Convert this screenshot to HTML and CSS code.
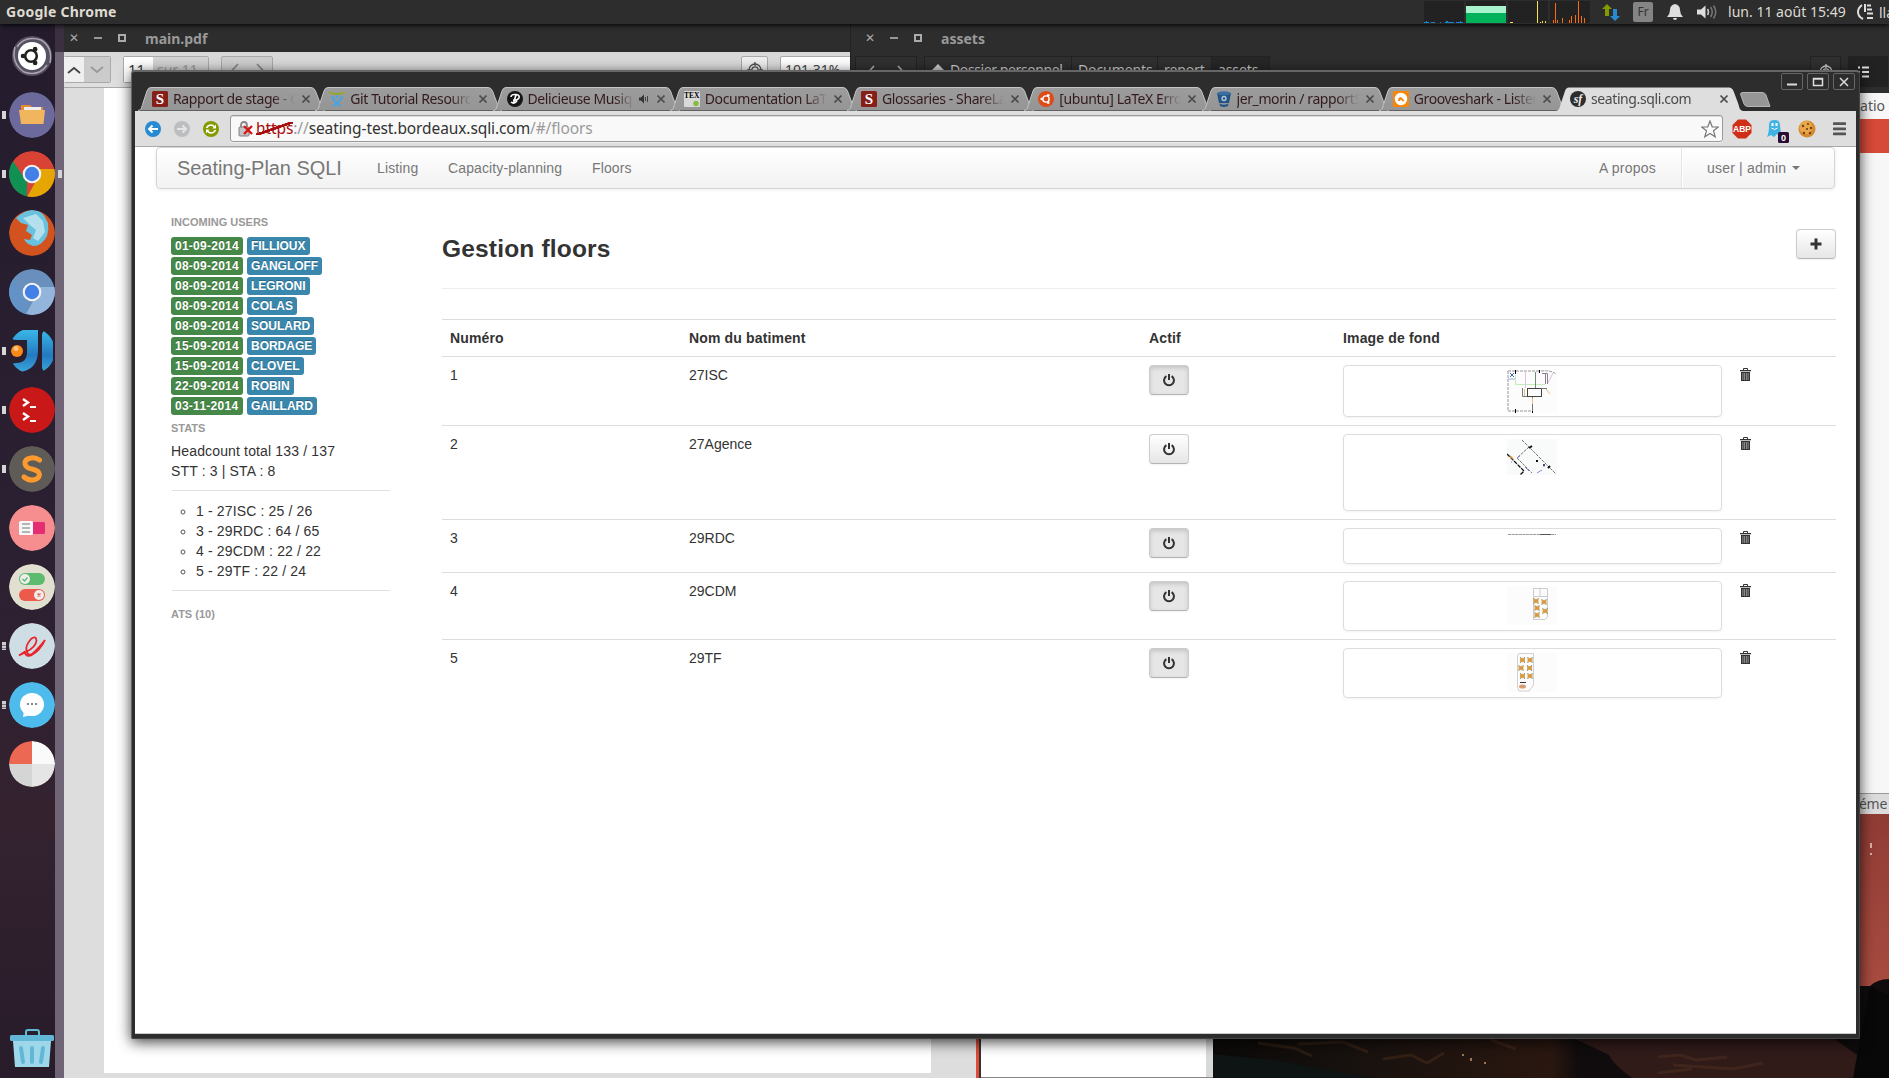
FILE: index.html
```html
<!DOCTYPE html>
<html lang="fr">
<head>
<meta charset="utf-8">
<title>Seating-Plan SQLI</title>
<link rel="stylesheet" href="styles.css">
</head>
<body>
<svg class="defs" width="0" height="0">
  <defs>
    <linearGradient id="tabfill" x1="0" y1="0" x2="0" y2="1"><stop offset="0" stop-color="#9c9c9c"/><stop offset="1" stop-color="#959595"/></linearGradient>
    <symbol id="tab" viewBox="0 0 187 24"><path d="M0 23.500C4 23 3.500 20 5 16L9 4Q10 .5 13 .5H173Q176 .5 177.500 4L182 16C183.500 20 183 23 187 23.500" fill="url(#tabfill)" stroke="#c4c4c4"/></symbol>
    <symbol id="tabon" viewBox="0 0 187 24"><path d="M0 24C4 23 3.500 20 5 16L9 4Q10 .5 13 .5H173Q176 .5 177.500 4L182 16C183.500 20 183 23 187 24Z" fill="#dedede"/></symbol>
    <symbol id="x" viewBox="0 0 10 10"><path d="M1.500 1.500L8.500 8.500M8.500 1.500L1.500 8.500" stroke="#4a4a4a" stroke-width="1.700"/></symbol>
    <symbol id="s" viewBox="0 0 16 16"><rect width="16" height="16" rx="1.500" fill="#852019"/><text x="8" y="13.300" text-anchor="middle" font-family="Liberation Serif" font-weight="bold" font-size="15" fill="#fff">S</text></symbol>
    <symbol id="power" viewBox="0 0 12 14"><path d="M3.400 3.200A4.900 4.900 0 1 0 8.600 3.200M6 1V7" fill="none" stroke="#333" stroke-width="2"/></symbol>
    <symbol id="trash" viewBox="0 0 11 13"><path d="M3.500 2V.5H7.500V2" fill="none" stroke="#333"/><rect y="2" width="11" height="1.300" fill="#333"/><path d="M1 4H10V13H1Z" fill="#333"/><path d="M2.900 5V12M4.600 5V12M6.400 5V12M8.100 5V12" stroke="#aaa" stroke-width=".8"/></symbol>
    <symbol id="desk" viewBox="0 0 7 7"><rect x=".6" y="1" width="5.800" height="5" fill="#e0a650"/><path d="M.5 .8H1.500M5.500 .8H6.500M.5 6.200H1.500M5.500 6.200H6.500" stroke="#46664b"/><path d="M1.500 3.500H5.500" stroke="#b58150" stroke-width=".8"/></symbol>
    <symbol id="target" viewBox="0 0 16 16"><g fill="none" stroke="currentColor" stroke-width="1.300"><circle cx="8" cy="8" r="6"/><circle cx="8" cy="8" r="3.200"/><path d="M8 0V4M0 8H4M12 8H16"/></g></symbol>
    <symbol id="prev" viewBox="0 0 8 14"><path d="M7 1L1.500 7L7 13" fill="none" stroke="currentColor" stroke-width="1.800"/></symbol>
    <symbol id="next" viewBox="0 0 8 14"><path d="M1 1L6.500 7L1 13" fill="none" stroke="currentColor" stroke-width="1.800"/></symbol>
    <symbol id="ubuntu" viewBox="0 0 16 16"><circle cx="8" cy="8" r="4.200" fill="none" stroke="currentColor" stroke-width="1.900"/><g fill="currentColor"><circle cx="2.200" cy="8" r="1.700"/><circle cx="11" cy="3" r="1.700"/><circle cx="11" cy="13" r="1.700"/></g></symbol>
  </defs>
</svg>
<div class="desktop">
  <svg class="wallpaper" width="677" height="264" viewBox="0 0 677 264">
    <defs><linearGradient id="sky" x1="0" y1="0" x2="0" y2="1"><stop offset="0" stop-color="#8f3c35"/><stop offset=".65" stop-color="#a84b40"/></linearGradient>
    <linearGradient id="ground" x1="0" y1="0" x2="1" y2="0"><stop offset="0" stop-color="#0b0a09"/><stop offset=".2" stop-color="#17110e"/><stop offset=".5" stop-color="#2a1710"/><stop offset=".54" stop-color="#100c0d"/></linearGradient></defs>
    <rect width="677" height="264" fill="url(#sky)"/>
    <path d="M0 172H657Q664 165 677 165V264H0Z" fill="url(#ground)"/>
    <path d="M360 224H620L677 264H419Q400 250 396 241Z" fill="#301b19"/>
    <path d="M657 172L677 182V264H640Z" fill="#090809"/>
    <g fill="none" stroke="#674023" stroke-width="3" opacity=".3"><path d="M45 229l36 5 18 8M85 230l45-2 25 10M170 245l28-4 16 8 17-10M278 226l25 9M445 243l22-2 16 5 31-3M460 251l60 4 30-6M445 259l34-4"/></g>
    <path d="M0 240L60 246L160 264H0Z" fill="#0e1414"/>
    <path d="M249 240h2v2h-2zM257 244h2v3h-2zM271 248h2v2h-2z" fill="#9a7654"/>
    <path d="M657 29h2v5h-2zM657 39h2v2h-2z" fill="#dfb0a5"/>
  </svg>

  <section class="win pdf">
    <header class="titlebar"><i class="wc-x">✕</i><i class="wc-min"></i><i class="wc-max"></i><b>main.pdf</b></header>
    <div class="pdfbar">
      <div class="updown"><span><svg width="14" height="8"><path d="M1 7L7 2L13 7" fill="none" stroke="#444" stroke-width="1.800"/></svg></span><span class="off"><svg width="14" height="8"><path d="M1 1L7 6L13 1" fill="none" stroke="#999" stroke-width="1.800"/></svg></span></div>
      <div class="pages"><span>11</span><em>sur 11</em></div>
      <div class="hist"><svg width="8" height="14"><use href="#prev"/></svg><svg width="8" height="14"><use href="#next"/></svg></div>
      <div class="fit"><svg width="16" height="16"><use href="#target"/></svg></div>
      <div class="zoomval">101,31%</div>
    </div>
    <div class="pdfbody"><div class="sheet"></div></div>
  </section>
  <div class="edge"><div class="e1"></div><div class="e2"></div><div class="e3"></div></div>

  <section class="win assets">
    <header class="titlebar"><i class="wc-x">✕</i><i class="wc-min"></i><i class="wc-max"></i><b>assets</b></header>
    <div class="crumbs">
      <div class="nav2"><svg width="8" height="14"><use href="#prev"/></svg><svg width="8" height="14"><use href="#next"/></svg></div>
      <div class="path"><span class="home"><svg width="14" height="12"><path d="M0 7L7 0L14 7H12V12H2V7Z" fill="#ccc"/></svg>Dossier personnel</span><span class="docs">Documents</span><span class="rep">report</span><span class="cur">assets</span></div>
      <div class="tgt"><svg width="16" height="16"><use href="#target"/></svg></div>
      <div class="views"><svg width="12" height="12"><path d="M0 1.500H2M4 1.500H11M0 6H2M4 6H11M0 10.500H2M4 10.500H11" stroke="#ddd" stroke-width="2"/></svg></div>
    </div>
    <div class="colhead">tatio</div>
    <div class="redband"></div>
    <div class="listing"></div>
    <footer>éme</footer>
  </section>

  <section class="win chrome">
    <div class="wbtns"><span><svg width="12" height="10"><path d="M1 7.500H11" stroke="#ddd" stroke-width="2"/></svg></span><span><svg width="12" height="10"><path d="M1.500 1.500H10.500V8.500H1.500ZM1 2H11" fill="none" stroke="#ddd" stroke-width="1.500"/></svg></span><span><svg width="12" height="10"><path d="M2 1L10 9M10 1L2 9" stroke="#ddd" stroke-width="1.500"/></svg></span></div>
    <div class="tabs">
      <div class="tab"><svg class="shape"><use href="#tab"/></svg><svg class="fav"><use href="#s"/></svg><span>Rapport de stage - G</span><svg class="cl"><use href="#x"/></svg></div>
      <div class="tab"><svg class="shape"><use href="#tab"/></svg><svg class="fav"><path d="M0 1Q8 5 16 1" fill="none" stroke="#91aa24" stroke-width="1.800"/><path d="M3 5Q4 10 12 15M13 5Q12 10 4 15" fill="none" stroke="#4fa3dd" stroke-width="2.400"/><circle cx="8" cy="5.500" r="1.700" fill="#4fa3dd"/></svg><span>Git Tutorial Resourc</span><svg class="cl"><use href="#x"/></svg></div>
      <div class="tab"><svg class="shape"><use href="#tab"/></svg><svg class="fav"><circle cx="8" cy="8" r="8" fill="#161616"/><path d="M4 6Q4 3 9 3.500Q13 4 12 7Q10 10 6 9M9 4L6.500 12M4 11Q7 13.500 10 10" fill="none" stroke="#fff" stroke-width="1.600"/></svg><span class="short">Delicieuse Musiq</span><svg class="snd" width="11" height="10"><path d="M0 3.500H2L5 .5V9.500L2 6.500H0Z" fill="#333"/><path d="M6.500 3V7M8.500 2V8" stroke="#444"/></svg><svg class="cl"><use href="#x"/></svg></div>
      <div class="tab"><svg class="shape"><use href="#tab"/></svg><svg class="fav"><rect width="16" height="16" rx="1" fill="#d9d9d9"/><text x="0" y="7" font-family="Liberation Serif" font-size="7.500" font-weight="bold">TEX</text><circle cx="12" cy="12.500" r="2.800" fill="#85bd40"/></svg><span>Documentation LaT</span><svg class="cl"><use href="#x"/></svg></div>
      <div class="tab"><svg class="shape"><use href="#tab"/></svg><svg class="fav"><use href="#s"/></svg><span>Glossaries - ShareLaT</span><svg class="cl"><use href="#x"/></svg></div>
      <div class="tab"><svg class="shape"><use href="#tab"/></svg><svg class="fav" color="#fff"><circle cx="8" cy="8" r="8" fill="#dd4b18"/><use href="#ubuntu" x="2" y="2" width="12" height="12"/></svg><span>[ubuntu] LaTeX Erro</span><svg class="cl"><use href="#x"/></svg></div>
      <div class="tab"><svg class="shape"><use href="#tab"/></svg><svg class="fav"><path d="M1 2L3 12H13L15 2Z" fill="#225487"/><ellipse cx="8" cy="2.300" rx="7" ry="2" fill="#3c6f9f"/><circle cx="8" cy="7.500" r="2" fill="#225487" stroke="#b9c9d8" stroke-width="1.300"/><path d="M3.500 12.500Q8 15 12.500 12.500L12 15Q8 17 4 15Z" fill="#225487"/></svg><span>jer_morin / rapportS</span><svg class="cl"><use href="#x"/></svg></div>
      <div class="tab"><svg class="shape"><use href="#tab"/></svg><svg class="fav"><rect width="16" height="16" fill="#f7860b"/><circle cx="8" cy="8" r="6.200" fill="#fff"/><path d="M5 10Q5 6 8 6L11.500 9.500L9.500 10.500L8 8.500Q7 8.500 7 10Z" fill="#f7860b"/></svg><span>Grooveshark - Listen</span><svg class="cl"><use href="#x"/></svg></div>
      <div class="tab on"><svg class="shape"><use href="#tabon"/></svg><svg class="fav"><circle cx="8" cy="8" r="8" fill="#2d2d2d"/><text x="8" y="11.500" text-anchor="middle" font-family="Liberation Serif" font-style="italic" font-weight="bold" font-size="12" fill="#eee">sf</text></svg><span>seating.sqli.com</span><svg class="cl"><use href="#x"/></svg></div>
      <svg class="newtab" width="31" height="15"><path d="M3 .5H22Q25 .5 26 3L30 14.500H8Q5 14.500 4 12L.5 2Q.5 .5 3 .5Z" fill="#969696" stroke="#b5b5b5"/></svg>
    </div>
    <div class="toolbar">
      <svg width="16" height="16"><circle cx="8" cy="8" r="8" fill="#268bd2"/><path d="M13 8H4M7.500 4.500L4 8L7.500 11.500" fill="none" stroke="#fff" stroke-width="1.900"/></svg>
      <svg width="16" height="16"><circle cx="8" cy="8" r="8" fill="#bbbfc1"/><path d="M3 8H12M8.500 4.500L12 8L8.500 11.500" fill="none" stroke="#e5e5e5" stroke-width="1.900"/></svg>
      <svg width="16" height="16"><circle cx="8" cy="8" r="8" fill="#859900"/><path d="M3.500 7Q5 4 8 4Q10 4 11.500 6M12.500 9Q11 12 8 12Q6 12 4.500 10" fill="none" stroke="#fff" stroke-width="1.600"/><path d="M13 3.500V7.500H9.500ZM3 12.500V8.500H6.500Z" fill="#fff"/></svg>
      <div class="omni">
        <svg width="15" height="16"><path d="M3 7V4.500Q3 1 6 1Q9 1 9 4.500V7" fill="none" stroke="#888" stroke-width="1.800"/><rect x="1" y="6" width="10" height="9" rx="1" fill="#c4c4c4" stroke="#808080"/><path d="M6 5L14 13M14 5L6 13" stroke="#d71414" stroke-width="2.300"/></svg>
        <span class="url"><s>https</s><i>://</i>seating-test.bordeaux.sqli.com<i>/#/floors</i></span>
        <svg class="star" width="18" height="18"><path d="M9 1L11.200 6.800L17.300 7L12.500 10.800L14.200 16.800L9 13.400L3.800 16.800L5.500 10.800L.7 7L6.800 6.800Z" fill="#fcfcfc" stroke="#777" stroke-width="1.200"/></svg>
      </div>
      <svg class="abp" width="20" height="20"><path d="M6 .5H14L19.500 6V14L14 19.500H6L.5 14V6Z" fill="#cf2f16"/><text x="10" y="13.200" text-anchor="middle" font-family="Liberation Sans" font-size="8.500" font-weight="bold" fill="#fff">ABP</text></svg>
      <svg class="ghost" width="22" height="24"><path d="M2 6Q2 1 7.500 1Q13 1 13 6L14 17L10 15L7 18L4 16L0 18Q2 14 2 6Z" fill="#3fb4e4"/><path d="M5.500 4V7M9.500 4V7" stroke="#fff" stroke-width="2"/><path d="M4.500 9Q7.500 12 10.500 9" fill="none" stroke="#fff"/><rect x="11" y="13" width="11" height="11" rx="1.500" fill="#2a0d35"/><text x="16.500" y="21.800" text-anchor="middle" font-family="Liberation Sans" font-size="9" font-weight="bold" fill="#fff">0</text></svg>
      <svg class="cookie" width="18" height="18"><circle cx="9" cy="9" r="8.500" fill="#d58b2b"/><circle cx="8" cy="7.500" r="6.500" fill="#eaa74a"/><g fill="#70401a"><circle cx="5" cy="6" r="1.200"/><circle cx="10" cy="4" r="1.100"/><circle cx="9" cy="9" r="1.100"/><circle cx="13" cy="8" r="1.200"/><circle cx="6" cy="13" r="1.200"/><circle cx="12" cy="13" r="1.200"/></g></svg>
      <svg class="burger" width="13" height="14"><path d="M1 1.700H12M1 6.800H12M1 11.900H12" stroke="#555" stroke-width="2.800" stroke-linecap="round"/></svg>
    </div>

    <div class="page">
      <nav class="navbar">
        <span class="brand">Seating-Plan SQLI</span><span class="l1">Listing</span><span class="l2">Capacity-planning</span><span class="l3">Floors</span>
        <span class="about">A propos</span><span class="user">user | admin <i class="caret"></i></span>
      </nav>
      <div class="cols">
        <aside>
          <h6>INCOMING USERS</h6>
          <div class="inc"><b>01-09-2014</b><b class="n">FILLIOUX</b></div>
          <div class="inc"><b>08-09-2014</b><b class="n">GANGLOFF</b></div>
          <div class="inc"><b>08-09-2014</b><b class="n">LEGRONI</b></div>
          <div class="inc"><b>08-09-2014</b><b class="n">COLAS</b></div>
          <div class="inc"><b>08-09-2014</b><b class="n">SOULARD</b></div>
          <div class="inc"><b>15-09-2014</b><b class="n">BORDAGE</b></div>
          <div class="inc"><b>15-09-2014</b><b class="n">CLOVEL</b></div>
          <div class="inc"><b>22-09-2014</b><b class="n">ROBIN</b></div>
          <div class="inc"><b>03-11-2014</b><b class="n">GAILLARD</b></div>
          <h6 class="stats">STATS</h6>
          <p>Headcount total 133 / 137</p>
          <p>STT : 3 | STA : 8</p>
          <ul><li>1 - 27ISC : 25 / 26</li><li>3 - 29RDC : 64 / 65</li><li>4 - 29CDM : 22 / 22</li><li>5 - 29TF : 22 / 24</li></ul>
          <h6 class="ats">ATS (10)</h6>
        </aside>
        <main>
          <div class="head"><h1>Gestion floors</h1><button class="btn"><svg width="12" height="12"><path d="M6 .5V11.500M.5 6H11.500" stroke="#333" stroke-width="3"/></svg></button></div>
          <div class="table">
            <div class="row th"><span>Numéro</span><span>Nom du batiment</span><span>Actif</span><span>Image de fond</span><span></span></div>
            <div class="row r1"><span>1</span><span>27ISC</span><span><button class="btn act"><svg width="12" height="14"><use href="#power"/></svg></button></span>
              <span class="thumb"><svg width="50" height="43"><rect width="50" height="43" fill="#fcfcfc"/><path d="M1 1V41H25M1 1H32M34 1Q44 0 49 4" fill="none" stroke="#999" stroke-dasharray="3 1"/><path d="M8.500 0V4M32.500 0V3M8.500 39V43M25.500 39V43" stroke="#000"/><path d="M1 9H8" stroke="#9aaee8"/><path d="M3 3L7 7M7 3L3 7" stroke="#3d6aa2"/><path d="M8.500 5V14.500H38" fill="none" stroke="#c3ecbb"/><path d="M18.500 2V18M41 13L46 3" fill="none" stroke="#e3bfe4"/><path d="M28.500 2V18" stroke="#6d8d73"/><path d="M35 3.500H40.500V14M38.500 3V14" fill="none" stroke="#8e8090"/><rect x="20.500" y="18.500" width="14" height="8" fill="none" stroke="#444"/><path d="M15.500 18V26.500H20M34 18.500H40M25.500 27V41" fill="none" stroke="#777"/><path d="M17.500 19V26M39 19L43 24M25.500 28V34" stroke="#ebbb89" fill="none"/></svg></span>
              <span class="del"><svg width="11" height="13"><use href="#trash"/></svg></span></div>
            <div class="row r2"><span>2</span><span>27Agence</span><span><button class="btn"><svg width="12" height="14"><use href="#power"/></svg></button></span>
              <span class="thumb"><svg width="50" height="36"><rect width="50" height="36" fill="#f9fbfa"/><path d="M15 1L49 35M22 8L10 19L25 34" fill="none" stroke="#777" stroke-dasharray="3 1"/><path d="M0 15L17 32L13 36" fill="none" stroke="#111" stroke-width="1.300" stroke-dasharray="4 1"/><path d="M3 17L6 20" stroke="#e28a25" stroke-width="1.600"/><path d="M22 9L25 7M41 29L43 27M29 22H31M36 26H38" stroke="#111" stroke-width="2"/><path d="M18 28L22 32M30 34L35 31M37 25v3M4 23h1M10 19l3-2" stroke="#8a88d8"/></svg></span>
              <span class="del"><svg width="11" height="13"><use href="#trash"/></svg></span></div>
            <div class="row r3"><span>3</span><span>29RDC</span><span><button class="btn act"><svg width="12" height="14"><use href="#power"/></svg></button></span>
              <span class="thumb"><svg width="50" height="3"><path d="M1 1.500H49" stroke="#999" stroke-dasharray="3 .6"/><path d="M33 1.500H44" stroke="#555"/></svg></span>
              <span class="del"><svg width="11" height="13"><use href="#trash"/></svg></span></div>
            <div class="row r4"><span>4</span><span>29CDM</span><span><button class="btn act"><svg width="12" height="14"><use href="#power"/></svg></button></span>
              <span class="thumb"><svg width="50" height="39"><rect width="50" height="39" fill="#fcfcfc"/><path d="M26.500 2V33.500H38L40.500 31V2.500H26.500M33 2V10M26 10.500H40" fill="none" stroke="#ccc"/><use href="#desk" x="26" y="12" width="6" height="6"/><use href="#desk" x="34" y="13" width="6" height="6"/><use href="#desk" x="27" y="19" width="6" height="6"/><use href="#desk" x="35" y="22" width="6" height="6"/><use href="#desk" x="27" y="26" width="6" height="6"/></svg></span>
              <span class="del"><svg width="11" height="13"><use href="#trash"/></svg></span></div>
            <div class="row r5"><span>5</span><span>29TF</span><span><button class="btn act"><svg width="12" height="14"><use href="#power"/></svg></button></span>
              <span class="thumb"><svg width="50" height="39"><rect width="50" height="39" fill="#fcfcfc"/><path d="M12 .5H26.500V32L22 38H12L10.500 34V3Z" fill="none" stroke="#d0d0d0"/><use href="#desk" x="12" y="4" width="7" height="6"/><use href="#desk" x="20" y="4" width="6" height="6"/><use href="#desk" x="11" y="12" width="6" height="6"/><use href="#desk" x="19" y="12" width="7" height="6"/><use href="#desk" x="12" y="20" width="7" height="6"/><use href="#desk" x="20" y="20" width="6" height="6"/><path d="M13 29.500H19" stroke="#333"/><ellipse cx="15.500" cy="33.500" rx="3.500" ry="2" fill="#d69d72"/></svg></span>
              <span class="del"><svg width="11" height="13"><use href="#trash"/></svg></span></div>
          </div>
        </main>
      </div>
    </div>
  </section>

  <div class="launcher">
    <div class="ic"><svg viewBox="0 0 46 46" color="#222"><circle cx="23" cy="23" r="20" fill="#676171" opacity=".75"/><path d="M8 14Q16 2 32 7Q44 14 41 30M38 32Q30 44 15 39Q2 30 6 14" fill="none" stroke="#aaa6af" stroke-width="1.500"/><circle cx="23" cy="23" r="14" fill="#fff"/><use href="#ubuntu" x="11" y="12" width="22" height="22"/></svg></div>
    <div class="ic run"><svg viewBox="0 0 46 46"><circle cx="23" cy="23" r="23" fill="#6c6a9c"/><path d="M12 20V13H21L23 15H34V22" fill="#e88a2e"/><path d="M15 19V15H32V19" fill="#eee"/><path d="M10 18H36L34.500 32H12Z" fill="#f1b55e"/></svg></div>
    <div class="ic run focus"><svg viewBox="0 0 46 46"><circle cx="23" cy="23" r="23" fill="#d94336"/><path d="M4 10L18 31L18 46A23 23 0 0 1 4 10" fill="#109153"/><path d="M46 18A23 23 0 0 1 18 46L31 23L25 18Z" fill="#e5a503"/><circle cx="23" cy="23" r="9.300" fill="#f3f3f3"/><circle cx="23" cy="23" r="7.200" fill="#427fe6"/></svg></div>
    <div class="ic"><svg viewBox="0 0 46 46"><circle cx="23" cy="23" r="23" fill="#d2531f"/><path d="M7 8Q16 0 23 0Q32 0 36 7L39 13Q40 20 38 26Q33 36 24 36Q17 34 15 29L21 30L23 25L17 21L19 15L12 13Z" fill="#68c2df"/><path d="M14 8L27 4L34 11L36 22L29 31L24 28L27 20L21 15Z" fill="#b4e0ed"/></svg></div>
    <div class="ic"><svg viewBox="0 0 46 46"><circle cx="23" cy="23" r="23" fill="#698fbd"/><path d="M4 10L18 31L18 46A23 23 0 0 1 4 10" fill="#6393c6"/><path d="M46 18A23 23 0 0 1 17 45L29 23L25 18Z" fill="#93b5dc"/><circle cx="23" cy="23" r="9.300" fill="#f3f3f3"/><circle cx="23" cy="23" r="7.200" fill="#427fe6"/></svg></div>
    <div class="ic run"><svg viewBox="0 0 46 46"><defs><linearGradient id="ji" x1="0" y1="0" x2="0" y2="1"><stop offset="0" stop-color="#39b7e8"/><stop offset=".6" stop-color="#2479c0"/><stop offset="1" stop-color="#3aa6da"/></linearGradient></defs><path d="M2 5Q2 2 6 2H29V22Q29 43 9 44Q2 44 2 39Q2 35 7 35Q18 35 18 24V12H7Q2 12 2 7Z" fill="url(#ji)"/><rect x="33" y="2" width="11" height="42" rx="5" fill="url(#ji)"/><circle cx="8" cy="23" r="6" fill="#f98918"/><circle cx="7" cy="20.500" r="2.500" fill="#ffc37d"/></svg></div>
    <div class="ic run"><svg viewBox="0 0 46 46"><circle cx="23" cy="23" r="23" fill="#c91818"/><path d="M14 12L19 15.500L14 19M14 26L19 29.500L14 33" fill="none" stroke="#fff" stroke-width="2.400"/><path d="M21 20H27M21 34H27" stroke="#fff" stroke-width="2"/></svg></div>
    <div class="ic run"><svg viewBox="0 0 46 46"><circle cx="23" cy="23" r="23" fill="#5f5c57"/><path d="M30.500 14Q26 11 22 12Q15.500 13 16 18Q17 22 23 23Q30 24.500 30.500 28.500Q30 33 24 34Q19 34.500 15 31" fill="none" stroke="#fd9a2f" stroke-width="5" stroke-linecap="round"/></svg></div>
    <div class="ic"><svg viewBox="0 0 46 46"><circle cx="23" cy="23" r="23" fill="#f68d8f"/><rect x="23" y="17" width="13" height="12" rx="1.500" fill="#e42d72"/><rect x="10" y="16" width="14" height="14" rx="1.500" fill="#f7f7f7"/><path d="M13 19H21M13 23H21M13 27H21" stroke="#b5b5b5" stroke-width="2"/></svg></div>
    <div class="ic"><svg viewBox="0 0 46 46"><circle cx="23" cy="23" r="23" fill="#e0dfd0"/><rect x="10" y="9" width="26" height="12" rx="6" fill="#5dbb70"/><rect x="10" y="25" width="26" height="12" rx="6" fill="#ed5a4c"/><circle cx="16" cy="15" r="5" fill="#eee"/><circle cx="30" cy="31" r="5" fill="#eee"/><path d="M13.500 15L15.500 17L18.500 13.500" fill="none" stroke="#5dbb70" stroke-width="1.400"/><path d="M28.500 29.500L31.500 32.500M31.500 29.500L28.500 32.500" stroke="#ed5a4c" stroke-width="1.400"/></svg></div>
    <div class="ic multi"><svg viewBox="0 0 46 46"><circle cx="23" cy="23" r="23" fill="#cfdde5"/><path d="M10 32.500L17 29Q27 24 27.500 17.500Q27 12 22 16Q16 23 17.500 28Q19 33 23 31Q29 26 36 17Q31 28 22 32.500Q17 34 15.500 29Z" fill="none" stroke="#e8242a" stroke-width="1.800"/></svg></div>
    <div class="ic multi"><svg viewBox="0 0 46 46"><circle cx="23" cy="23" r="23" fill="#4dbcec"/><ellipse cx="23" cy="22.500" rx="12" ry="11.500" fill="#fff"/><path d="M15 29L14 35L22 33Z" fill="#fff"/><path d="M18 22H20M22 22H24M26 22H28" stroke="#888" stroke-width="2"/></svg></div>
    <div class="ic"><svg viewBox="0 0 46 46"><path d="M23 23V0A23 23 0 0 0 0 23Z" fill="#ec6853"/><path d="M23 23V0A23 23 0 0 1 46 23Z" fill="#fafafa"/><path d="M23 23H0A23 23 0 0 0 23 46Z" fill="#d5d5d5"/><path d="M23 23H46A23 23 0 0 1 23 46Z" fill="#e5e5e5"/></svg></div>
    <div class="ic bin"><svg viewBox="0 0 46 46"><path d="M17 11V7Q17 5 19 5H28Q30 5 30 7V11" fill="none" stroke="#62b6d6" stroke-width="2"/><path d="M4 16H42L40 42H6Z" fill="#9fd7ea"/><rect x="1" y="10" width="44" height="6" rx="1.500" fill="#62b6d6"/><path d="M12 23L14 37M23 23V37M34 23L32 37" stroke="#62b6d6" stroke-width="4" stroke-linecap="round"/></svg></div>
  </div>

  <div class="panel">
    <b>Google Chrome</b>
    <svg class="graphs" width="166" height="24"><path d="M0 1H40V23H0ZM42 1H82V23H42ZM84 1H124V23H84ZM126 1H166V23H126Z" fill="#222"/><rect x="42" y="6" width="40" height="7" fill="#a9f3cf"/><rect x="42" y="13" width="40" height="10" fill="#00b35b"/><path d="M0 22.500H5M7 22.500H11M16 22.500H17M21 22.500H30M32 22.500H39M2 21.500H3M22 21.500H24M36 21.500H37" stroke="#1189d6"/><path d="M86 22.500H89M113.500 1V23M116 22.500H117M118.500 21V23M121.500 21V23" stroke="#ffe14b"/><path d="M129.500 20V23M131.500 3V23M133.500 20V23M138.500 18V23M145.500 20V23M147.500 16V23M151.500 15V23M154.500 1V23M157.500 16V23M160.500 18V23" stroke="#fd6b0a"/></svg>
    <svg class="net" width="18" height="17"><path d="M5 0L10 5H7V12H3V5H0Z" fill="#859900"/><path d="M13 17L8 12H11V5H15V12H18Z" fill="#268bd2"/></svg>
    <span class="fr">Fr</span>
    <svg class="bell" width="16" height="16"><path d="M8 0Q13 1 13 6Q13 10 16 13H0Q3 10 3 6Q3 1 8 0ZM6 14H10Q10 16 8 16Q6 16 6 14Z" fill="#dedede"/></svg>
    <svg class="vol" width="21" height="14"><path d="M0 4.500H4L8.500 .5V13.500L4 9.500H0Z" fill="#dedede"/><path d="M10.500 4Q12.500 7 10.500 10" fill="none" stroke="#ccc" stroke-width="1.500"/><path d="M13.500 2Q17 7 13.500 12M16.500 .5Q21 7 16.500 13.500" fill="none" stroke="#777" stroke-width="1.500"/></svg>
    <span class="date">lun. 11 août 15:49</span>
    <svg class="pw" width="17" height="16"><path d="M5 1Q1 4 1 8Q1 12.500 6 15M8 0V8M10 1.500H14M10 5.500H15M10 9.500H16M10 14H16" fill="none" stroke="#dedede" stroke-width="2"/></svg>
    <span class="who">lla</span>
  </div>
</div>
</body>
</html>
```
FILE: styles.css
```css
* { box-sizing: border-box; }
body { margin: 0; background: #fff; }
i, em { font-style: normal; }
svg { display: block; flex: none; }
.defs { position: absolute; }
.desktop { position: relative; width: 1889px; height: 1078px; overflow: hidden; font-family: "Noto Sans", "Open Sans", sans-serif; }
.wallpaper { position: absolute; left: 1213px; top: 814px; }
.win { position: absolute; overflow: hidden; }

.panel { position: absolute; z-index: 9; left: 0; top: 0; width: 1889px; height: 24px; overflow: hidden; background: #2d2d2d; color: #dfdbd2; display: flex; align-items: center; white-space: nowrap; font-size: 14px; box-shadow: 0 1px 5px #000; }
.panel > * { flex: none; }
.panel b { padding-left: 6px; width: 1424px; font-size: 14px; letter-spacing: .25px; line-height: 22px; }
.net { margin-left: 12px; }
.fr { margin-left: 13px; width: 20px; height: 20px; border-radius: 2px; background: #848484; color: #333; font-size: 12px; line-height: 19px; text-align: center; }
.bell { margin-left: 14px; }
.vol { margin-left: 14px; }
.date { margin-left: 10px; width: 129px; letter-spacing: .02px; line-height: 22px; }
.who { margin-left: 5px; }

.titlebar { height: 28px; background: #2d2d2d; color: #999; display: flex; align-items: center; font-size: 14px; }
.titlebar i { flex: none; }
.wc-x { width: 24px; padding-left: 5px; font: 12px "DejaVu Sans", sans-serif; color: #aaa; }
.wc-min { width: 8px; height: 2px; margin: 0 16px 0 6px; background: #999; }
.wc-max { width: 8px; height: 8px; border: 2px solid #aaa; margin-right: 19px; }
.pdf { left: 64px; top: 24px; width: 786px; height: 1054px; }
.pdfbar { height: 36px; padding: 4px 0 0 0; display: flex; background: linear-gradient(#d8d8d8, #dfdfdf); border-bottom: 1px solid #aaa; font-size: 14px; overflow: hidden; }
.pdfbar > div { height: 27px; border: 1px solid #aaa; border-radius: 2px; display: flex; align-items: center; flex: none; }
.updown { width: 47px; border-left: 0 !important; }
.updown span { width: 20px; height: 25px; display: flex; align-items: center; justify-content: center; background: #efefef; }
.updown .off { width: 26px; background: #cbcbcb; }
.pages { margin-left: 12px; width: 86px; background: #d3d3d3; }
.pages span { width: 29px; height: 25px; padding: 0 0 0 4px; line-height: 25px; background: #fff; color: #333; font-size: 15px; }
.pages em { color: #999; padding-left: 4px; }
.hist { margin-left: 12px; width: 65px; background: #cfcfcf; color: #888; justify-content: space-around; }
.pdfbar .hist { width: 52px; }
.fit { margin-left: 468px; width: 27px; justify-content: center; color: #555; background: #eee; }
.zoomval { margin-left: 12px; width: 90px; background: #fff; color: #444; padding-left: 4px; }
.pdfbody { height: 990px; width: 912px; background: #ddd; padding-left: 40px; }
.sheet { width: 827px; height: 985px; background: #fff; }

.edge { position: absolute; left: 850px; top: 1030px; width: 363px; height: 48px; display: flex; background: #ddd; }
.e1 { width: 81px; height: 43px; background: #fff; }
.e2 { width: 50px; background: linear-gradient(90deg, #ddd 45px, #df4b37 45px 48px, #333 48px); }
.e3 { width: 232px; background: linear-gradient(90deg, #fff 225px, #d9d9d9 225px); border-bottom: 1px solid #888; }

.assets { left: 850px; top: 24px; width: 1039px; height: 790px; background: #2d2d2d; border-left: 1px solid #222; }
.assets .titlebar { padding-left: 9px; height: 32px; padding-bottom: 4px; }
.crumbs { height: 37px; display: flex; color: #ccc; font-size: 14px; background: #2d2d2d; }
.crumbs > div { height: 31px; border: 1px solid #222; background: #303030; display: flex; align-items: center; flex: none; }
.crumbs .nav2 { width: 62px; margin-left: 4px; justify-content: space-around; color: #aaa; }
.crumbs .path { margin-left: 7px; width: 346px; }
.path span { display: flex; align-items: center; gap: 5px; height: 25px; align-self: flex-start; padding: 0 6px; border-right: 1px solid #222; font-size: 14px; letter-spacing: -.1px; white-space: nowrap; }
.path .home { width: 147px; letter-spacing: -.4px; }
.path .docs { width: 86px; }
.path .rep { width: 54px; }
.path .cur { flex: 1; height: 29px; padding-bottom: 4px; background: #272727; border: 0; }
.crumbs .tgt { margin-left: 540px; width: 31px; justify-content: center; }
.crumbs .views { margin-left: 7px; width: 40px; padding-left: 9px; background: #222; }
.colhead { height: 26px; background: #f7f7f7; color: #555; font-size: 14px; line-height: 26px; padding-left: 1004px; white-space: nowrap; }
.redband { height: 34px; background: #d54a38; }
.listing { height: 640px; background: #f7f7f7; }
.assets footer { height: 21px; background: #dcdcdc; border-top: 1px solid #999; color: #555; font-size: 14px; line-height: 19px; padding-left: 1008px; white-space: nowrap; letter-spacing: -.3px; }

.chrome { overflow: visible; left: 131px; top: 70px; width: 1729px; height: 969px; background: #2d2d2d; border: 1px solid #666; border-top-width: 2px; border-right-color: #444; border-bottom-color: #444; border-radius: 4px 4px 2px 2px; padding: 0 3px 4px; box-shadow: 0 3px 14px rgba(0,0,0,.75); display: flex; flex-direction: column; }
.wbtns { position: absolute; right: 4px; top: 1px; display: flex; gap: 4px; }
.wbtns span { width: 22px; height: 17px; border: 1px solid #666; border-radius: 2px; display: flex; align-items: center; justify-content: center; }
.tabs { height: 39px; padding: 15px 0 0 3px; display: flex; }
.tab { position: relative; flex: none; width: 187px; margin-right: -9.750px; height: 24px; padding-left: 14px; display: flex; align-items: center; color: #331a1e; font-size: 14px; }
.shape { position: absolute; left: 0; top: 0; width: 187px; height: 24px; }
.fav { position: relative; width: 16px; height: 16px; }
.tab span { position: relative; margin-left: 5px; width: 122px; overflow: hidden; white-space: nowrap; letter-spacing: -.4px; line-height: 22px; -webkit-mask-image: linear-gradient(90deg, #000 82%, transparent); mask-image: linear-gradient(90deg, #000 82%, transparent); }
.tab .short { width: 106px; }
.snd { position: relative; margin: 0 0 0 5px; }
.cl { position: relative; width: 10px; height: 10px; margin-left: 6px; }
.on { color: #4a4a4a; z-index: 2; }
.newtab { margin: 5px 0 0 7px; }
.toolbar { height: 36px; background: #dedede; border-bottom: 1px solid #aaa; padding: 0 10px 0 10px; display: flex; align-items: center; }
.toolbar > svg { margin-right: 13px; }
.omni { width: 1495px; height: 27px; margin-left: -2px; border: 1px solid #999; border-radius: 3px; background: #f9f9f9; display: flex; align-items: center; padding: 0 3px 0 7px; box-shadow: inset 0 1px #ddd, 0 1px #eee; }
.url { flex: 1; margin-left: 3px; font-size: 15.500px; color: #333; letter-spacing: -.1px; line-height: 22px; padding-bottom: 2px; }
.url i { color: #999; }
.url s { color: #a80f0f; text-decoration: none; background: linear-gradient(to top left, transparent 44%, #a80f0f 45% 55%, transparent 56%) 0 60% / 100% 13px no-repeat; }
.toolbar > svg.abp { margin: 0 0 0 9px; }
.toolbar > svg.ghost { margin: 4px 0 0 15px; }
.toolbar > svg.cookie { margin: 0 0 0 9px; }
.toolbar > svg.burger { margin: 0 0 0 17px; }

.page { flex: 1; background: #fff; padding: 0 21px; border-bottom: 1px solid #ccc; font: 14px/20px "Liberation Sans", Arial, sans-serif; color: #333; }
.navbar { height: 42px; border: 1px solid #d4d4d4; border-radius: 4px; background: linear-gradient(#fff, #f2f2f2); box-shadow: 0 1px 4px rgba(0,0,0,.065); display: flex; align-items: center; color: #777; white-space: nowrap; padding-left: 20px; letter-spacing: .12px; }
.brand { font-size: 20px; width: 200px; letter-spacing: -.05px; }
.l1 { width: 71px; }
.l2 { width: 144px; }
.about { margin-left: auto; width: 82px; letter-spacing: .2px; }
.user { width: 153px; height: 40px; line-height: 40px; padding-left: 25px; border-left: 1px solid #e5e5e5; box-shadow: inset 1px 0 #fff; letter-spacing: .2px; }
.caret { display: inline-block; border: 4px solid transparent; border-top-color: #777; border-bottom: 0; margin: 0 0 3px 2px; vertical-align: middle; }
.cols { display: grid; grid-template-columns: 219px 1394px; column-gap: 52px; padding-left: 15px; }
aside { padding-top: 23px; }
h6 { margin: 0; font-size: 11px; line-height: 20px; color: #999; }
.inc { height: 20px; display: flex; gap: 4px; }
.inc:nth-of-type(1) { margin-top: 5px; }
.inc b { height: 18px; padding: 2px 4px; border-radius: 3px; background: #468847; color: #fff; font-size: 12px; letter-spacing: .26px; line-height: 14px; text-shadow: 0 -1px rgba(0,0,0,.25); }
.inc b:first-child { width: 72px; }
.inc .n { background: #3a87ad; letter-spacing: -.02px; }
.stats { line-height: 20px; padding-top: 1px; margin-bottom: 3px; }
aside p { margin: 0; letter-spacing: .15px; }
ul { margin: 9px 0 13px 1px; padding: 10px 0 9px 24px; border: solid #e0e0e0; border-width: 1px 0; list-style: circle; letter-spacing: .15px; }
li::marker { color: #555; }
main { padding-top: 39px; }
.head { height: 61px; border-bottom: 1px solid #eee; display: flex; justify-content: space-between; }
h1 { margin: 0; font-size: 24.500px; line-height: 42px; letter-spacing: .18px; }
.head .btn { margin-top: 1px; }
.btn { width: 40px; height: 30px; padding: 0; border: 1px solid #ccc; border-bottom-color: #b3b3b3; border-radius: 4px; background: linear-gradient(#fff, #e6e6e6); box-shadow: 0 1px 2px rgba(0,0,0,.05); display: flex; align-items: center; justify-content: center; }
.act { background: #e6e6e6; box-shadow: inset 0 2px 4px rgba(0,0,0,.15), 0 1px 2px rgba(0,0,0,.05); }
.table { margin-top: 30px; }
.row { display: grid; grid-template-columns: 239px 460px 194px 397px 104px; border-top: 1px solid #ddd; padding: 8px 0; }
.row > span { margin-left: 8px; }
.th { height: 37px; font-weight: bold; letter-spacing: .15px; }
.r1 { height: 69px; } .r2 { height: 94px; } .r3 { height: 53px; } .r4 { height: 67px; } .r5 { height: 67px; }
.thumb { width: 379px; border: 1px solid #ddd; border-radius: 4px; padding: 4px 0 0 163px; box-shadow: 0 1px 3px rgba(0,0,0,.055); }
.del { padding-top: 3px; }

.launcher { position: absolute; left: 0; top: 24px; width: 64px; height: 1054px; display: flex; flex-direction: column; gap: 13px; padding: 9px 0 7px 9px; background: linear-gradient(#3a3040 28px, #6f6576 28px) 55px 0 / 9px 100% no-repeat, linear-gradient(#241c2d, #2b2032 50%, #34222f 75%, #281c2a); }
.ic { position: relative; width: 46px; height: 46px; flex: none; }
.ic svg { width: 46px; height: 46px; border-radius: 50%; }
.bin { margin-top: auto; }
.bin svg { border-radius: 0; }
.run::before, .multi::before, .focus::after { content: ""; position: absolute; left: -7px; top: 19px; width: 4px; height: 8px; background: #d5d5d5; }
.focus::after { left: 49px; }
.multi::before { background: linear-gradient(#ccc 3px, #777 3px 4px, #ccc 4px 6px, #777 6px 7px, #ccc 7px); }
```
